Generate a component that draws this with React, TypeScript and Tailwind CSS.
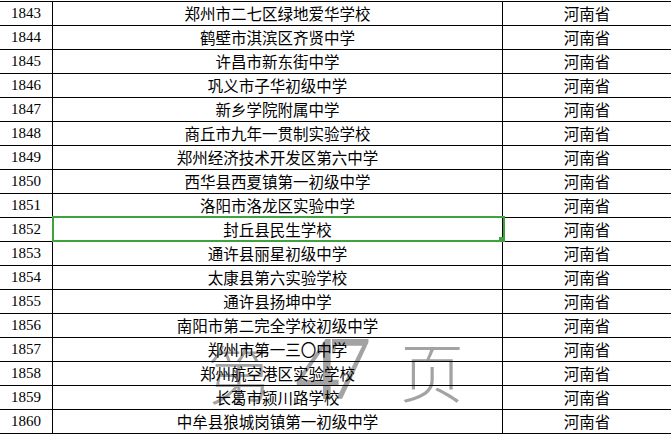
import React from 'react';

const rows: [number, string][] = [
    [1843, '郑州市二七区绿地爱华学校'],
    [1844, '鹤壁市淇滨区齐贤中学'],
    [1845, '许昌市新东街中学'],
    [1846, '巩义市子华初级中学'],
    [1847, '新乡学院附属中学'],
    [1848, '商丘市九年一贯制实验学校'],
    [1849, '郑州经济技术开发区第六中学'],
    [1850, '西华县西夏镇第一初级中学'],
    [1851, '洛阳市洛龙区实验中学'],
    [1852, '封丘县民生学校'],
    [1853, '通许县丽星初级中学'],
    [1854, '太康县第六实验学校'],
    [1855, '通许县扬坤中学'],
    [1856, '南阳市第二完全学校初级中学'],
    [1857, '郑州市第一三〇中学'],
    [1858, '郑州航空港区实验学校'],
    [1859, '长葛市颍川路学校'],
    [1860, '中牟县狼城岗镇第一初级中学'],
];

const cjk = "font-['Noto_Sans_CJK_SC',sans-serif]";

export default function App() {
    return (
        <div className="relative w-[671px] h-[436px] overflow-hidden bg-white">
            {/* page watermark, sits behind the grid */}
            <div className="absolute inset-0 pointer-events-none text-[#a3a3a3]">
                <span className={`absolute left-[207px] top-[339px] text-[64px] leading-none font-light ${cjk}`}>第</span>
                <span className="absolute left-[295px] top-[324px] text-[90px] leading-none tracking-[-14px] font-['Liberation_Serif',serif]">47</span>
                <span className={`absolute left-[400px] top-[337px] text-[64px] leading-none font-light ${cjk}`}>页</span>
            </div>

            <div className="relative pt-px">
                <div className="border-t border-black">
                    {rows.map(([no, name]) => (
                        <div key={no} className="flex h-6 border-b border-black">
                            <div className="w-[53px] flex items-center justify-center font-['Liberation_Serif',serif] text-[15px] text-black border-r border-black">
                                {no}
                            </div>
                            <div className={`w-[450px] flex items-center justify-center text-[15.5px] text-black border-r border-black ${cjk}`}>
                                {name}
                            </div>
                            <div className={`flex-1 flex items-center justify-center text-[15.5px] text-black ${cjk}`}>
                                河南省
                            </div>
                        </div>
                    ))}
                </div>

                {/* selected cell with fill handle */}
                <div className="absolute left-[52px] top-[216px] w-[453px] h-[26px] border-2 border-[#3fa33d]">
                    <div className="absolute -right-[1px] -bottom-[2px] w-[5px] h-[5px] bg-[#3fa33d]" />
                </div>
            </div>
        </div>
    );
}
